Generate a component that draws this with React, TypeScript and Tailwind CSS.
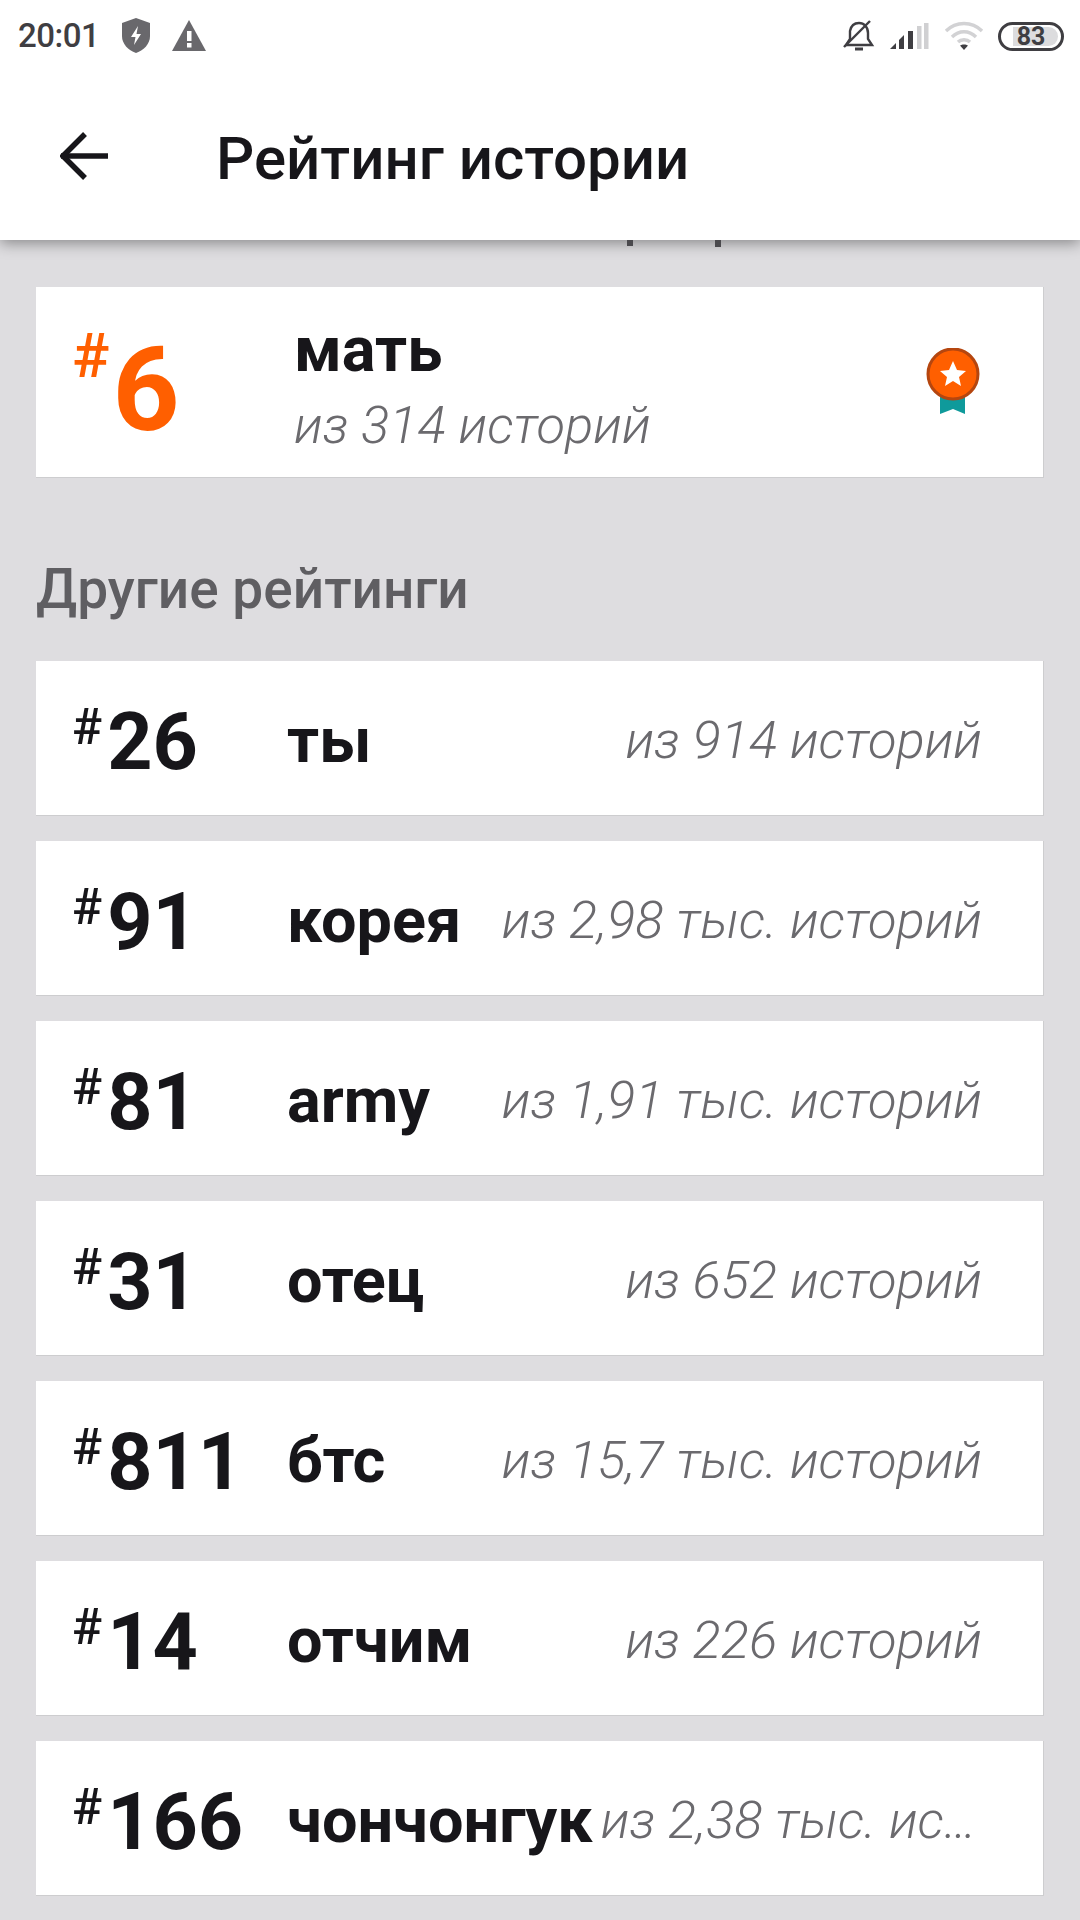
import React from 'react';

const rows = [
  { rank: '26', name: 'ты', total: 'из 914 историй' },
  { rank: '91', name: 'корея', total: 'из 2,98 тыс. историй' },
  { rank: '81', name: 'army', total: 'из 1,91 тыс. историй' },
  { rank: '31', name: 'отец', total: 'из 652 историй' },
  { rank: '811', name: 'бтс', total: 'из 15,7 тыс. историй' },
  { rank: '14', name: 'отчим', total: 'из 226 историй' },
  { rank: '166', name: 'чончонгук', total: 'из 2,38 тыс. историй' },
];

function StatusBar() {
  return (
    <div className="h-[72px] flex items-center justify-between pl-[18px] pr-[16px] bg-white">
      <div className="flex items-center">
        <span className="text-[33px] font-medium text-[#3f3e42] tracking-[-0.5px]">20:01</span>
        <svg className="ml-[22px]" width="30" height="36" viewBox="0 0 30 36">
          <path d="M15 0 L29 5 V18 C29 26 23 32 15 35 C7 32 1 26 1 18 V5 Z" fill="#69686c" />
          <path d="M17 8 L10 19 H14.5 L13 27 L20 16 H15.5 Z" fill="#fff" />
        </svg>
        <svg className="ml-[21px]" width="34" height="32" viewBox="0 0 34 32">
          <path d="M17 0 L34 31 H0 Z" fill="#69686c" />
          <rect x="15" y="11" width="4.5" height="10" fill="#fff" />
          <rect x="15" y="23" width="4.5" height="4.5" fill="#fff" />
        </svg>
      </div>
      <div className="flex items-center">
        <svg width="32" height="32" viewBox="0 0 32 32" fill="none" stroke="#3f3e42" strokeWidth="2.4">
          <path d="M3 25 H29 L25 19 V13 C25 7 21 3 16 3 C11 3 8 6 7 11 V19 Z" />
          <path d="M12 29 H20" strokeWidth="3" />
          <path d="M1 27 L27 1" />
        </svg>
        <svg className="ml-[14px]" width="40" height="28" viewBox="0 0 40 28">
          <path d="M1 27 L7 21 V27 Z" fill="#3f3e42" />
          <path d="M10 18 L15 13 V27 H10 Z" fill="#3f3e42" />
          <rect x="19" y="9" width="5" height="18" fill="#3f3e42" />
          <rect x="28" y="4" width="4.5" height="23" fill="#d0d0d2" />
          <rect x="35" y="1" width="4.5" height="26" fill="#d0d0d2" />
        </svg>
        <svg className="ml-[15px]" width="40" height="30" viewBox="0 0 40 30" fill="none" stroke="#d2d2d4" strokeWidth="3.4">
          <path d="M2 10 C12 0 28 0 38 10" />
          <path d="M8 16 C15 9 25 9 32 16" />
          <path d="M14 21 C17 18 23 18 26 21" />
          <path d="M16 24.5 L20 29 L24 24.5 C22 23 18 23 16 24.5 Z" fill="#3f3e42" stroke="none" />
        </svg>
        <div className="relative ml-[14px] w-[66px] h-[29px] rounded-full border-[3px] border-[#3f3e42] flex items-center justify-center overflow-hidden">
          <div className="absolute left-[12px] right-[3px] inset-y-[2px] rounded-r-full bg-[#dcdcde]" />
          <span className="relative text-[25px] leading-none font-bold text-[#3f3e42]">83</span>
        </div>
      </div>
    </div>
  );
}

function RatingRow({ rank, name, total }: { rank: string; name: string; total: string }) {
  return (
    <div className="h-[155px] bg-white border-b border-r border-[#cdcdcf] flex items-center pl-[36px] pr-[61px]">
      <div className="w-[215px] shrink-0 pt-[8px] flex items-start text-[#17161a]">
        <span className="text-[50px] leading-[50px] font-medium mt-[-10px]">#</span>
        <span className="text-[79px] leading-[60px] font-bold ml-[5px]">{rank}</span>
      </div>
      <span className="shrink-0 pt-[5px] text-[63px] leading-none font-bold text-[#17161a]">{name}</span>
      <span className="flex-1 min-w-0 pl-[8px] pt-[4px] text-right truncate text-[52.5px] leading-[60px] font-light italic text-[#6b6a6e]">{total}</span>
    </div>
  );
}

export default function App() {
  return (
    <div className="w-[1080px] h-[1920px] overflow-hidden bg-[#dedde0] font-['Roboto',sans-serif]">
      <div className="relative z-10 bg-white shadow-[0_3px_14px_rgba(0,0,0,0.4)]">
        <StatusBar />
        <div className="h-[168px] flex items-center pl-[60px]">
          <svg width="48" height="48" viewBox="0 0 48 48" fill="none" stroke="#17161a" strokeWidth="5.5">
            <path d="M1 24 H48" />
            <path d="M25 2 L3 24 L25 46" />
          </svg>
          <h1 className="ml-[108px] pt-[5px] text-[60px] font-medium text-[#17161a]">Рейтинг истории</h1>
        </div>
        {/* descenders of the heading scrolled under the toolbar */}
        <div className="absolute left-[627px] top-full w-[6px] h-[6px] bg-[#4a494d]" />
        <div className="absolute left-[715px] top-full w-[6px] h-[7px] bg-[#4a494d]" />
      </div>
      <div className="px-[36px] pt-[47px]">
        <div className="h-[191px] bg-white border-b border-r border-[#cdcdcf] flex items-center pl-[36px] pr-[61px]">
          <div className="w-[222px] shrink-0 pt-[16px] flex items-start text-[#ff5f00]">
            <span className="text-[62px] leading-[62px] font-medium mt-[-21px]">#</span>
            <span className="text-[117px] leading-[88px] font-bold ml-[3px]">6</span>
          </div>
          <div className="flex-1 pt-[16px]">
            <div className="text-[63px] leading-[70px] font-bold text-[#17161a]">мать</div>
            <div className="text-[52.5px] leading-[80px] font-light italic text-[#6b6a6e]">из 314 историй</div>
          </div>
          <svg className="mr-[2px] mb-[2px]" width="54" height="66" viewBox="0 0 54 66">
            <path d="M14 44 H39 V66 L27 61 L14 66 Z" fill="#0f9a9b" />
            <circle cx="27" cy="26" r="25" fill="#ff5f00" stroke="#b5460f" strokeWidth="3" />
            <path d="M27 13 L31 22 L40 23 L33 29 L35 38 L27 33 L19 38 L21 29 L14 23 L23 22 Z" fill="#fff" />
          </svg>
        </div>
        <h2 className="mt-[76px] text-[55px] leading-[70px] font-medium text-[#5f5e62]">Другие рейтинги</h2>
        <div className="mt-[37px] flex flex-col gap-[25px]">
          {rows.map((row) => (
            <RatingRow key={row.rank} {...row} />
          ))}
        </div>
      </div>
    </div>
  );
}
